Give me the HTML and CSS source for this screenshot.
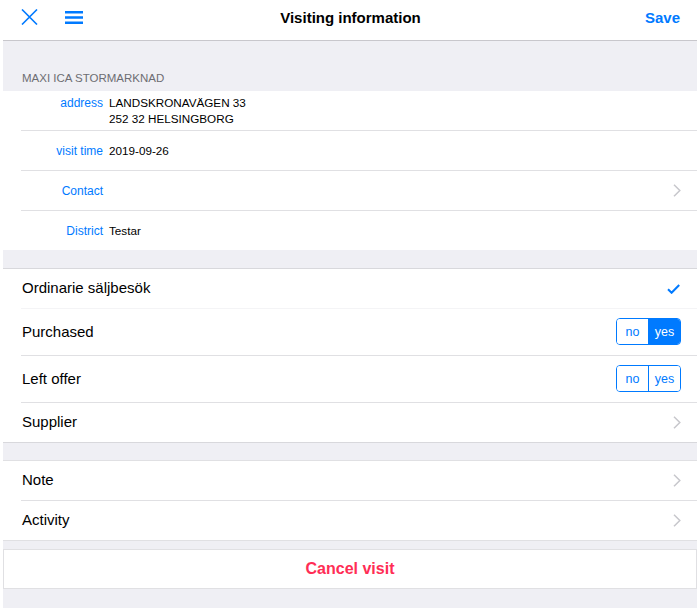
FILE: index.html
```html
<!DOCTYPE html>
<html lang="en">
<head>
<meta charset="utf-8">
<title>Visiting information</title>
<link rel="stylesheet" href="styles.css">
</head>
<body>
<div class="page">
  <header class="navbar">
    <div class="nav-left">
      <button class="icon-btn close" aria-label="Close">
        <svg width="17" height="16" viewBox="0 0 17 16"><path d="M1 0.5 L16 15.5 M16 0.5 L1 15.5" stroke="#007aff" stroke-width="1.6" fill="none"/></svg>
      </button>
      <button class="icon-btn menu" aria-label="Menu">
        <svg width="18" height="13" viewBox="0 0 18 13"><path d="M0 1.3 H18 M0 6.5 H18 M0 11.7 H18" stroke="#007aff" stroke-width="2.6" fill="none"/></svg>
      </button>
    </div>
    <h1 class="nav-title">Visiting information</h1>
    <button class="save-btn">Save</button>
  </header>

  <div class="section-header">MAXI ICA STORMARKNAD</div>
  <div class="group info-group">
    <div class="info-row multi">
      <div class="info-label">address</div>
      <div class="info-value">LANDSKRONAVÄGEN 33<br>252 32 HELSINGBORG</div>
    </div>
    <div class="info-row">
      <div class="info-label">visit time</div>
      <div class="info-value">2019-09-26</div>
    </div>
    <div class="info-row">
      <div class="info-label">Contact</div>
      <div class="info-value"></div>
      <span class="chevron"><svg width="8" height="13" viewBox="0 0 8 13"><path d="M1 0.8 L6.8 6.5 L1 12.2" stroke="#c7c7cc" stroke-width="1.5" fill="none"/></svg></span>
    </div>
    <div class="info-row">
      <div class="info-label">District</div>
      <div class="info-value">Testar</div>
    </div>
  </div>

  <div class="group main-group">
    <div class="row faint">
      <span class="row-text">Ordinarie säljbesök</span>
      <svg class="check" width="13" height="10" viewBox="0 0 13 10"><path d="M1 5.2 L4.6 8.8 L12.2 1" stroke="#007aff" stroke-width="2" fill="none"/></svg>
    </div>
    <div class="row tall">
      <span class="row-text">Purchased</span>
      <div class="segmented">
        <span class="seg">no</span>
        <span class="seg active">yes</span>
      </div>
    </div>
    <div class="row tall">
      <span class="row-text">Left offer</span>
      <div class="segmented">
        <span class="seg">no</span>
        <span class="seg">yes</span>
      </div>
    </div>
    <div class="row">
      <span class="row-text">Supplier</span>
      <span class="chevron"><svg width="8" height="13" viewBox="0 0 8 13"><path d="M1 0.8 L6.8 6.5 L1 12.2" stroke="#c7c7cc" stroke-width="1.5" fill="none"/></svg></span>
    </div>
  </div>

  <div class="group extra-group">
    <div class="row">
      <span class="row-text">Note</span>
      <span class="chevron"><svg width="8" height="13" viewBox="0 0 8 13"><path d="M1 0.8 L6.8 6.5 L1 12.2" stroke="#c7c7cc" stroke-width="1.5" fill="none"/></svg></span>
    </div>
    <div class="row">
      <span class="row-text">Activity</span>
      <span class="chevron"><svg width="8" height="13" viewBox="0 0 8 13"><path d="M1 0.8 L6.8 6.5 L1 12.2" stroke="#c7c7cc" stroke-width="1.5" fill="none"/></svg></span>
    </div>
  </div>

  <button class="cancel-btn">Cancel visit</button>
</div>
</body>
</html>
```
FILE: styles.css
```css
* { box-sizing: border-box; }
html { background: #ffffff; }
body {
  margin: 0 3px;
  font-family: "Liberation Sans", Arial, sans-serif;
  color: #000;
}
.page {
  background: #efeff4;
  min-height: 608px;
  display: flex;
  flex-direction: column;
}
button {
  font-family: inherit;
  background: none;
  border: none;
  padding: 0;
  margin: 0;
  cursor: pointer;
}
.navbar {
  height: 41px;
  background: #fff;
  border-bottom: 1px solid #c8c7cc;
  display: flex;
  align-items: center;
  padding: 0 17px 0 18px;
}
.nav-left {
  display: flex;
  align-items: center;
  gap: 27px;
  flex: 1;
}
.icon-btn { display: flex; margin-top: -6px; }
.nav-title {
  flex: 0 0 auto;
  margin: -6px 0 0;
  font-size: 15px;
  font-weight: bold;
  color: #000;
}
.save-btn {
  flex: 1;
  text-align: right;
  margin-top: -6px;
  font-size: 15px;
  font-weight: bold;
  color: #007aff;
}
.section-header {
  padding: 30px 19px 6px;
  font-size: 11.5px;
  line-height: 14px;
  color: #6d6d72;
  text-transform: uppercase;
}
.group {
  background: #fff;
}
.info-group {
  margin-bottom: 18px;
}
.info-row {
  display: flex;
  align-items: center;
  min-height: 40px;
  padding-right: 16px;
  border-bottom: 1px solid #e0e0e3;
  margin-left: 18px;
}
.info-row.multi {
  align-items: flex-start;
  padding-top: 4px;
}
.info-row:last-child { border-bottom: none; min-height: 39px; }
.info-label {
  width: 82px;
  text-align: right;
  font-size: 12px;
  line-height: 16px;
  color: #007aff;
  flex: 0 0 auto;
}
.info-value {
  flex: 1;
  margin-left: 6px;
  font-size: 11.7px;
  line-height: 16px;
  color: #000;
}
.chevron { display: flex; }
.main-group {
  border-top: 1px solid #d8d8dc;
  border-bottom: 1px solid #d8d8dc;
  margin-bottom: 17px;
}
.extra-group {
  border-top: 1px solid #e0e0e3;
  border-bottom: 1px solid #e0e0e3;
  margin-bottom: 8px;
}
.row {
  display: flex;
  align-items: center;
  justify-content: space-between;
  height: 40px;
  margin-left: 18px;
  padding: 0 16px 0 1px;
  border-bottom: 1px solid #e0e0e3;
}
.row:last-child { border-bottom: none; height: 39px; }
.row.faint { border-bottom-color: #f4f4f6; }
.row.tall { height: 47px; }
.row-text {
  font-size: 15px;
  line-height: 18px;
  margin-top: -1px;
  color: #000;
}
.check { margin-right: 1px; }
.segmented {
  display: flex;
  width: 65px;
  height: 27px;
  margin-top: -1px;
  border: 1px solid #007aff;
  border-radius: 4px;
  overflow: hidden;
}
.seg {
  flex: 1;
  display: flex;
  align-items: center;
  justify-content: center;
  font-size: 12.5px;
  color: #007aff;
  background: #fff;
}
.seg + .seg { border-left: 1px solid #007aff; }
.seg.active {
  background: #007aff;
  color: #fff;
}
.cancel-btn {
  display: block;
  width: 100%;
  height: 40px;
  background: #fff;
  border: 1px solid #e0e0e3;
  font-size: 16px;
  line-height: 18px;
  font-weight: bold;
  color: #ff2d55;
}
```
